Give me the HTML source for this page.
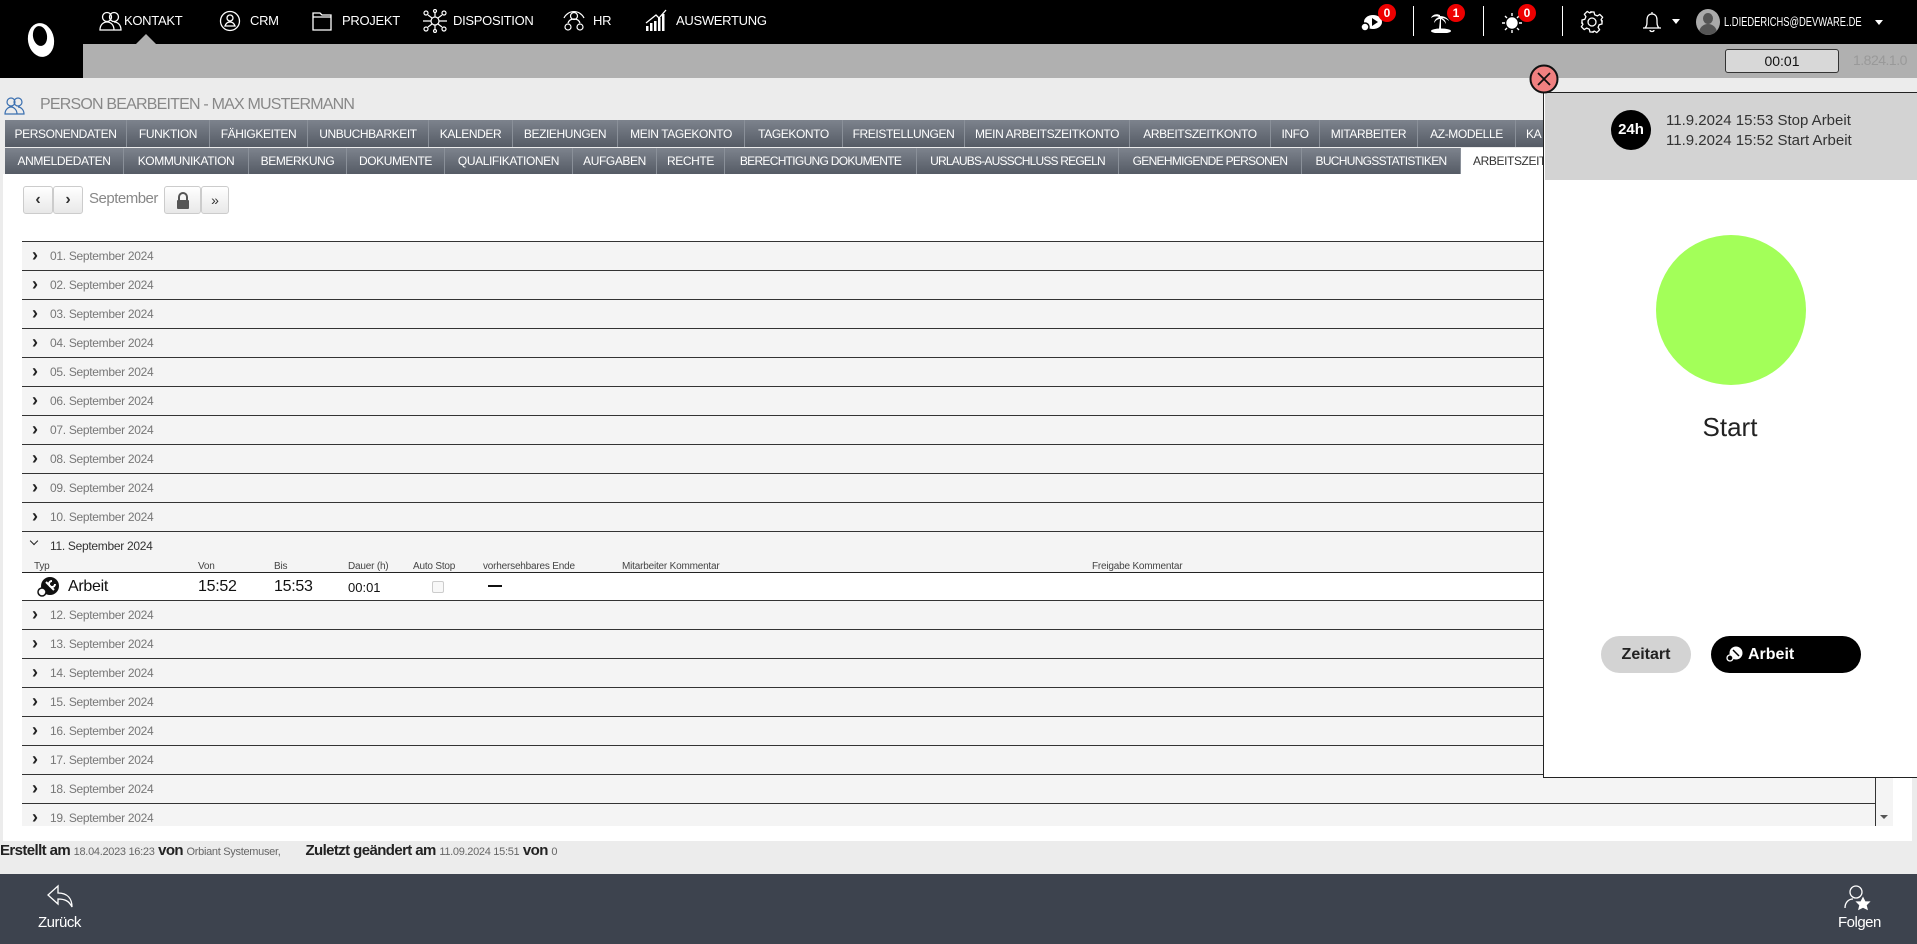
<!DOCTYPE html>
<html><head><meta charset="utf-8"><style>
*{box-sizing:border-box;margin:0;padding:0}
body{width:1917px;height:944px;overflow:hidden;background:#ececec;font-family:"Liberation Sans",sans-serif;position:relative;color:#333}
.abs{position:absolute}
#top{left:0;top:0;width:1917px;height:44px;background:#000}
#logo{left:0;top:0;width:83px;height:78px;background:#000}
#gbar{left:83px;top:44px;width:1834px;height:34px;background:#b0b0b0}
.nav{top:13px;color:#fff;font-size:13px;white-space:nowrap;letter-spacing:-0.3px}
.tabs{left:5px;height:27px;display:flex}
.tab{height:100%;background:linear-gradient(#7d838d,#555b65);color:#fff;font-size:12px;letter-spacing:-0.4px;display:flex;align-items:center;justify-content:center;border-right:1px solid #8a9099;white-space:nowrap;overflow:hidden}
.row{position:absolute;left:22px;width:1853px;height:29px;background:#f4f4f4;border-top:1px solid #333;font-size:12px;letter-spacing:-0.3px;color:#777;padding-left:28px;line-height:28px}
.row:before{content:"›";position:absolute;left:10px;top:-1px;color:#222;font-size:18px;font-weight:bold}
.badge{width:18px;height:18px;border-radius:9px;background:#e00;color:#fff;font-size:12px;font-weight:bold;text-align:center;line-height:18px}
.sep{top:6px;width:1px;height:30px;background:#fff}
.btn{top:186px;height:28px;background:linear-gradient(#fff,#e8e8e8);border:1px solid #ccc;border-radius:3px;display:flex;align-items:center;justify-content:center;font-size:16px;color:#333}
.dh{top:561px;font-size:10px;color:#444;letter-spacing:-0.2px}
</style></head><body>
<div class="abs" id="top"></div>
<div class="abs" id="gbar"></div>
<div class="abs" id="logo"><svg width="83" height="78"><ellipse cx="41" cy="40" rx="13" ry="17" fill="#fff" transform="rotate(-10 41 40)"/><ellipse cx="40" cy="36" rx="7" ry="10" fill="#000" transform="rotate(-10 40 36)"/></svg></div>
<svg class="abs" style="left:99px;top:10px" width="24" height="22" fill="none" stroke="#fff" stroke-width="1.3"><circle cx="8" cy="7" r="4.5"/><circle cx="15" cy="7" r="4.5"/><path d="M1 20c0-5 3-8 7-8s7 3 7 8zM15 12c4 0 7 3 7 8h-7"/></svg>
<div class="abs nav" style="left:124px">KONTAKT</div>
<div class="abs" style="left:136px;top:34px;width:0;height:0;border-left:10px solid transparent;border-right:10px solid transparent;border-bottom:10px solid #b0b0b0"></div>
<svg class="abs" style="left:219px;top:10px" width="22" height="22" fill="none" stroke="#fff" stroke-width="1.3"><circle cx="11" cy="11" r="9.5"/><circle cx="11" cy="8" r="3"/><path d="M6 16c1-3 3-4 5-4s4 1 5 4z"/></svg>
<div class="abs nav" style="left:250px">CRM</div>
<svg class="abs" style="left:311px;top:10px" width="22" height="22" fill="none" stroke="#fff" stroke-width="1.3"><path d="M2 3h7l2 2h9v15H2z"/><path d="M2 7h18"/></svg>
<div class="abs nav" style="left:342px">PROJEKT</div>
<svg class="abs" style="left:422px;top:9px" width="26" height="24" fill="none" stroke="#fff" stroke-width="1.2"><circle cx="13" cy="12" r="4"/><circle cx="4" cy="4" r="2"/><circle cx="22" cy="4" r="2"/><circle cx="4" cy="20" r="2"/><circle cx="22" cy="20" r="2"/><circle cx="13" cy="2" r="1.5"/><circle cx="13" cy="22" r="1.5"/><path d="M6 6l4 3M20 6l-4 3M6 18l4-3M20 18l-4-3M13 4v4M13 16v4M1 12h8M17 12h8"/></svg>
<div class="abs nav" style="left:453px">DISPOSITION</div>
<svg class="abs" style="left:560px;top:8px" width="28" height="26" fill="none" stroke="#fff" stroke-width="1.2"><circle cx="14" cy="8" r="3.5"/><path d="M8 15c1-3 3-4 6-4s5 1 6 4"/><circle cx="8" cy="19" r="3"/><circle cx="20" cy="19" r="3"/><path d="M4 10A11 11 0 0 1 24 10"/></svg>
<div class="abs nav" style="left:593px">HR</div>
<svg class="abs" style="left:644px;top:8px" width="24" height="24" fill="#fff"><rect x="2" y="18" width="2.5" height="5"/><rect x="6" y="15" width="2.5" height="8"/><rect x="10" y="13" width="2.5" height="10"/><rect x="14" y="10" width="2.5" height="13"/><rect x="18" y="6" width="2.5" height="17"/><path d="M2 15L12 7l3 3 7-8" stroke="#fff" fill="none" stroke-width="1.3"/></svg>
<div class="abs nav" style="left:676px">AUSWERTUNG</div>
<svg class="abs" style="left:1360px;top:13px" width="24" height="20" fill="#fff"><ellipse cx="13" cy="9" rx="9" ry="7"/><circle cx="5" cy="14" r="4" fill="#fff" stroke="#000" stroke-width="1.5"/><path d="M12 5l6 4-6 4z" fill="#000"/></svg>
<div class="abs badge" style="left:1378px;top:4px">0</div>
<div class="abs sep" style="left:1413px"></div>
<svg class="abs" style="left:1430px;top:9px" width="22" height="24" fill="#fff"><path d="M10 6c-4-2-8 0-9 3 3-2 6-2 8-1-3 1-5 4-5 6 2-3 4-4 6-4l-1 10h2l0-10c2 1 4 3 5 5 0-3-2-5-4-6 2 0 5 1 7 3-1-3-5-5-9-5z"/><ellipse cx="11" cy="22" rx="10" ry="2.5"/></svg>
<div class="abs badge" style="left:1447px;top:4px">1</div>
<div class="abs sep" style="left:1483px"></div>
<svg class="abs" style="left:1500px;top:10px" width="24" height="24" fill="#fff" stroke="#fff" stroke-width="1.4"><circle cx="12" cy="13" r="5"/><path d="M12 3v3M12 20v3M2 13h3M19 13h3M5 6l2 2M17 18l2 2M5 20l2-2M17 8l2-2"/></svg>
<div class="abs badge" style="left:1518px;top:4px">0</div>
<div class="abs sep" style="left:1562px"></div>
<svg class="abs" style="left:1580px;top:10px" width="24" height="24" fill="none" stroke="#fff" stroke-width="1.3"><circle cx="12" cy="12" r="4"/><path d="M10 2h4l.7 2.8 2.6 1.1 2.5-1.5 2.8 2.8-1.5 2.5 1.1 2.6L22 10v4l-2.8.7-1.1 2.6 1.5 2.5-2.8 2.8-2.5-1.5-2.6 1.1L14 22h-4l-.7-2.8-2.6-1.1-2.5 1.5-2.8-2.8 1.5-2.5-1.1-2.6L2 14v-4l2.8-.7 1.1-2.6-1.5-2.5 2.8-2.8 2.5 1.5 2.6-1.1z"/></svg>
<svg class="abs" style="left:1642px;top:9px" width="20" height="26" fill="none" stroke="#fff" stroke-width="1.3"><path d="M3 19c2-2 2-4 2-8 0-4 2-6 5-6s5 2 5 6c0 4 0 6 2 8zM1 19h18M8 21c0 2 4 2 4 0M10 3v2"/></svg>
<div class="abs" style="left:1672px;top:19px;border-left:4px solid transparent;border-right:4px solid transparent;border-top:5px solid #fff"></div>
<div class="abs" style="left:1696px;top:9px;width:24px;height:26px;border-radius:50%;background:#aaa;overflow:hidden"><div style="position:absolute;left:7px;top:4px;width:10px;height:11px;border-radius:50%;background:#555"></div><div style="position:absolute;left:3px;top:15px;width:18px;height:14px;border-radius:9px 9px 0 0;background:#555"></div></div>
<div class="abs" style="left:1724px;top:14px;color:#fff;font-size:13px;white-space:nowrap;transform:scaleX(0.72);transform-origin:0 0">L.DIEDERICHS@DEVWARE.DE</div>
<div class="abs" style="left:1875px;top:20px;border-left:4px solid transparent;border-right:4px solid transparent;border-top:5px solid #fff"></div>
<div class="abs" style="left:1725px;top:49px;width:114px;height:24px;border:1px solid #333;border-radius:3px;background:#d8d8d8;text-align:center;font-size:14px;line-height:22px;color:#111">00:01</div>
<div class="abs" style="left:1853px;top:52px;font-size:14px;color:#999;letter-spacing:-0.5px">1.824.1.0</div>
<svg class="abs" style="left:4px;top:96px" width="22" height="20" fill="none" stroke="#3a6fb0" stroke-width="1.2"><circle cx="7" cy="6" r="4"/><circle cx="14" cy="6" r="4"/><path d="M1 18c0-4 3-7 6-7s6 3 6 7zM14 11c3 0 6 3 6 7h-7"/></svg>
<div class="abs" style="left:40px;top:96px;font-size:16px;color:#888;letter-spacing:-0.8px">PERSON BEARBEITEN - MAX MUSTERMANN</div>
<div class="abs tabs" style="top:120px">
<div class="tab" style="width:122px">PERSONENDATEN</div><div class="tab" style="width:83px">FUNKTION</div><div class="tab" style="width:98px">FÄHIGKEITEN</div><div class="tab" style="width:121px">UNBUCHBARKEIT</div><div class="tab" style="width:84px">KALENDER</div><div class="tab" style="width:105px">BEZIEHUNGEN</div><div class="tab" style="width:127px">MEIN TAGEKONTO</div><div class="tab" style="width:98px">TAGEKONTO</div><div class="tab" style="width:122px">FREISTELLUNGEN</div><div class="tab" style="width:165px">MEIN ARBEITSZEITKONTO</div><div class="tab" style="width:141px">ARBEITSZEITKONTO</div><div class="tab" style="width:49px">INFO</div><div class="tab" style="width:98px">MITARBEITER</div><div class="tab" style="width:98px">AZ-MODELLE</div><div class="tab" style="width:60px;justify-content:flex-start;padding-left:10px">KA</div>
</div>
<div class="abs tabs" style="top:148px;height:26px">
<div class="tab" style="width:119px">ANMELDEDATEN</div><div class="tab" style="width:125px">KOMMUNIKATION</div><div class="tab" style="width:98px">BEMERKUNG</div><div class="tab" style="width:98px">DOKUMENTE</div><div class="tab" style="width:128px">QUALIFIKATIONEN</div><div class="tab" style="width:84px">AUFGABEN</div><div class="tab" style="width:68px">RECHTE</div><div class="tab" style="width:192px;letter-spacing:-0.7px">BERECHTIGUNG DOKUMENTE</div><div class="tab" style="width:202px;letter-spacing:-0.8px">URLAUBS-AUSSCHLUSS REGELN</div><div class="tab" style="width:183px;letter-spacing:-0.7px">GENEHMIGENDE PERSONEN</div><div class="tab" style="width:159px;letter-spacing:-0.7px">BUCHUNGSSTATISTIKEN</div><div class="tab" style="width:90px;background:#fff;color:#333;justify-content:flex-start;padding-left:12px">ARBEITSZEIT</div>
</div>
<div class="abs" style="left:3px;top:174px;width:1909px;height:667px;background:#fff"></div>
<div class="abs btn" style="left:23px;width:30px;font-weight:bold">‹</div>
<div class="abs btn" style="left:53px;width:30px;font-weight:bold">›</div>
<div class="abs" style="left:89px;top:190px;font-size:15px;color:#888;letter-spacing:-0.5px">September</div>
<div class="abs btn" style="left:164px;width:37px"><svg width="14" height="17"><path d="M3 8V5a4 4 0 0 1 8 0v3" fill="none" stroke="#555" stroke-width="2"/><rect x="1" y="8" width="12" height="9" rx="1" fill="#555"/></svg></div>
<div class="abs btn" style="left:201px;width:28px;font-size:14px">»</div>
<div class="abs" style="left:22px;top:241px;width:1871px;height:585px;background:#f4f4f4;border-left:1px solid #333;border-radius:3px 0 0 0"></div>
<div class="abs" style="left:1875px;top:241px;width:1px;height:585px;background:#333"></div>
<div class="abs" style="left:1880px;top:815px;border-left:4px solid transparent;border-right:4px solid transparent;border-top:4px solid #555"></div>
<div class="row" style="top:241px">01. September 2024</div>
<div class="row" style="top:270px">02. September 2024</div>
<div class="row" style="top:299px">03. September 2024</div>
<div class="row" style="top:328px">04. September 2024</div>
<div class="row" style="top:357px">05. September 2024</div>
<div class="row" style="top:386px">06. September 2024</div>
<div class="row" style="top:415px">07. September 2024</div>
<div class="row" style="top:444px">08. September 2024</div>
<div class="row" style="top:473px">09. September 2024</div>
<div class="row" style="top:502px">10. September 2024</div>
<div class="row" style="top:531px;color:#333;height:42px">11. September 2024</div>
<div class="abs" style="left:27px;top:533px;width:14px;height:20px;background:#f4f4f4"></div>
<div class="abs" style="left:31px;top:538px;width:6px;height:6px;border-right:1.5px solid #222;border-bottom:1.5px solid #222;transform:rotate(45deg)"></div>
<div class="abs dh" style="left:34px">Typ</div><div class="abs dh" style="left:198px">Von</div><div class="abs dh" style="left:274px">Bis</div><div class="abs dh" style="left:348px">Dauer (h)</div><div class="abs dh" style="left:413px">Auto Stop</div><div class="abs dh" style="left:483px">vorhersehbares Ende</div><div class="abs dh" style="left:622px">Mitarbeiter Kommentar</div><div class="abs dh" style="left:1092px">Freigabe Kommentar</div>
<div class="abs" style="left:22px;top:572px;width:1853px;height:28px;background:#fff;border-top:1.5px solid #222"></div>
<svg class="abs" style="left:37px;top:576px" width="24" height="22"><circle cx="13" cy="10" r="9" fill="#111"/><path d="M9 6l8 8M15 5a3 3 0 1 0 3 3" stroke="#fff" stroke-width="2" fill="none"/><circle cx="5" cy="16" r="4" fill="#fff" stroke="#111" stroke-width="1.5"/></svg>
<div class="abs" style="left:68px;top:578px;font-size:16px;color:#111;letter-spacing:-0.3px">Arbeit</div>
<div class="abs" style="left:198px;top:578px;font-size:16px;color:#111;letter-spacing:-0.3px">15:52</div>
<div class="abs" style="left:274px;top:578px;font-size:16px;color:#111;letter-spacing:-0.3px">15:53</div>
<div class="abs" style="left:348px;top:580px;font-size:13px;color:#111">00:01</div>
<div class="abs" style="left:432px;top:581px;width:12px;height:12px;border:1px solid #ccc;border-radius:2px;background:#f8f8f8"></div>
<div class="abs" style="left:488px;top:585px;width:14px;height:2px;background:#111"></div>
<div class="row" style="top:600px">12. September 2024</div>
<div class="row" style="top:629px">13. September 2024</div>
<div class="row" style="top:658px">14. September 2024</div>
<div class="row" style="top:687px">15. September 2024</div>
<div class="row" style="top:716px">16. September 2024</div>
<div class="row" style="top:745px">17. September 2024</div>
<div class="row" style="top:774px">18. September 2024</div>
<div class="row" style="top:803px;height:23px">19. September 2024</div>
<div class="abs" style="left:0;top:842px;font-size:15px;color:#222;white-space:nowrap;font-weight:bold;letter-spacing:-0.6px">Erstellt am <span style="font-size:11px;color:#666;font-weight:normal;letter-spacing:-0.3px">18.04.2023 16:23</span> von <span style="font-size:11px;color:#666;font-weight:normal;letter-spacing:-0.3px">Orbiant Systemuser,</span>&nbsp;&nbsp;&nbsp;&nbsp;&nbsp;&nbsp; Zuletzt geändert am <span style="font-size:11px;color:#666;font-weight:normal;letter-spacing:-0.3px">11.09.2024 15:51</span> von <span style="font-size:11px;color:#666;font-weight:normal">0</span></div>
<div class="abs" style="left:0;top:874px;width:1917px;height:70px;background:#3d434e"></div>
<svg class="abs" style="left:46px;top:884px" width="30" height="26" fill="none" stroke="#fff" stroke-width="1.3"><path d="M12 2L2 11l10 9v-5c7 0 11 2 14 8 0-8-4-14-14-14z"/></svg>
<div class="abs" style="left:38px;top:914px;color:#fff;font-size:15px;letter-spacing:-0.5px">Zurück</div>
<svg class="abs" style="left:1842px;top:884px" width="30" height="28" fill="none" stroke="#fff" stroke-width="1.3"><circle cx="14" cy="8" r="6"/><path d="M3 24c0-6 4-9 8-9"/><path d="M21 14l2 4h4l-3 3 1 4-4-2-4 2 1-4-3-3h4z" fill="#fff"/></svg>
<div class="abs" style="left:1838px;top:914px;color:#fff;font-size:15px;letter-spacing:-0.5px">Folgen</div>
<div class="abs" style="left:1543px;top:92px;width:374px;height:686px;background:#fff;border:1.5px solid #222;border-right:none"></div>
<div class="abs" style="left:1545px;top:93px;width:372px;height:87px;background:#d3d3d3"></div>
<div class="abs" style="left:1611px;top:110px;width:40px;height:40px;border-radius:50%;background:#000;color:#fff;font-size:15px;font-weight:bold;text-align:center;line-height:40px">24h</div>
<div class="abs" style="left:1666px;top:111px;font-size:15px;color:#333;line-height:20px">11.9.2024 15:53 Stop Arbeit<br>11.9.2024 15:52 Start Arbeit</div>
<div class="abs" style="left:1656px;top:235px;width:150px;height:150px;border-radius:50%;background:#a3ff59"></div>
<div class="abs" style="left:1543px;top:412px;width:374px;text-align:center;font-size:26px;color:#222">Start</div>
<div class="abs" style="left:1601px;top:636px;width:90px;height:37px;border-radius:19px;background:#d3d3d3;text-align:center;line-height:37px;font-size:16px;font-weight:bold;color:#222">Zeitart</div>
<div class="abs" style="left:1711px;top:636px;width:150px;height:37px;border-radius:19px;background:#000;color:#fff;font-size:16px;font-weight:bold;line-height:37px;padding-left:37px">Arbeit</div>
<svg class="abs" style="left:1726px;top:646px" width="18" height="16"><circle cx="10" cy="7" r="6.5" fill="#fff"/><path d="M7 4l6 6" stroke="#000" stroke-width="1.5"/><circle cx="4" cy="12" r="3" fill="#000" stroke="#fff" stroke-width="1.3"/></svg>
<svg class="abs" style="left:1529px;top:64px" width="30" height="30"><circle cx="15" cy="15" r="13.5" fill="#f08080" stroke="#111" stroke-width="2"/><path d="M9 9l12 12M21 9L9 21" stroke="#111" stroke-width="1.8"/></svg>
</body></html>
